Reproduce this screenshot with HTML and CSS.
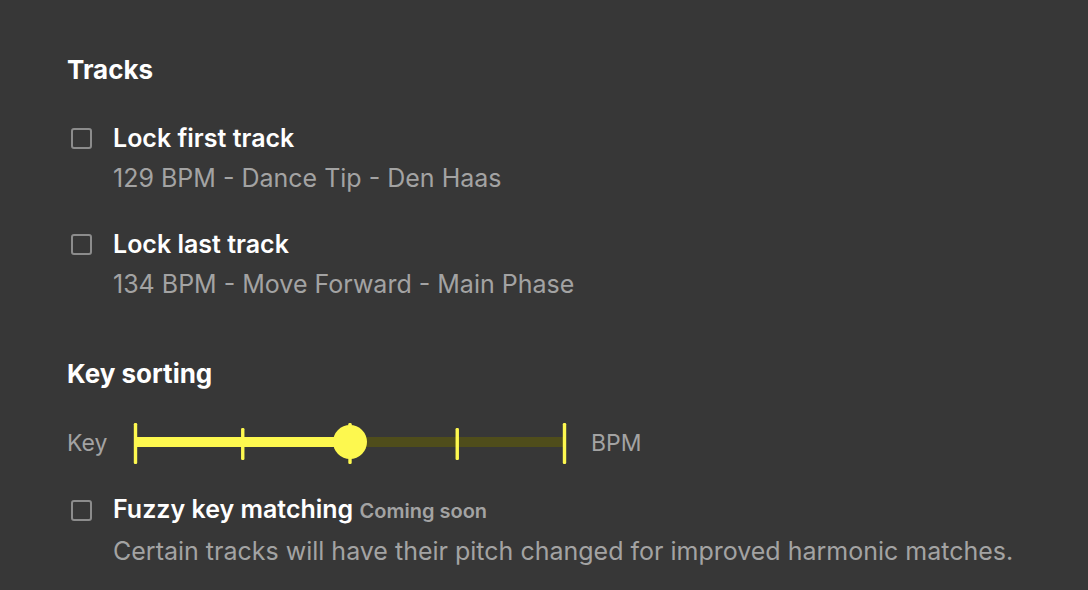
FILE: index.html
```html
<!DOCTYPE html>
<html>
<head>
<meta charset="utf-8">
<link rel="stylesheet" href="styles.css">
</head>
<body>
<main class="panel">
  <section class="section">
    <h2 class="heading">Tracks</h2>
    <div class="option">
      <span class="checkbox"></span>
      <div class="option-text">
        <div class="option-title">Lock first track</div>
        <div class="option-sub">129 BPM - Dance Tip - Den Haas</div>
      </div>
    </div>
    <div class="option">
      <span class="checkbox"></span>
      <div class="option-text">
        <div class="option-title">Lock last track</div>
        <div class="option-sub">134 BPM - Move Forward - Main Phase</div>
      </div>
    </div>
  </section>
  <section class="section section-key">
    <h2 class="heading heading-key">Key sorting</h2>
    <div class="slider-row">
      <span class="slider-label slider-label-start">Key</span>
      <svg class="slider" width="440" height="48" viewBox="0 0 440 48">
        <rect x="5.5" y="18" width="429" height="10" fill="#4f4d1b"/>
        <rect x="5.5" y="18" width="214.5" height="10" fill="#fdf84f"/>
        <rect x="3.8" y="4" width="3.4" height="41" rx="1.2" fill="#fdf84f"/>
        <rect x="111.05" y="9" width="3.4" height="32" rx="1.2" fill="#fdf84f"/>
        <rect x="218.3" y="4" width="3.4" height="41" rx="1.2" fill="#fdf84f"/>
        <rect x="325.55" y="9" width="3.4" height="32" rx="1.2" fill="#fdf84f"/>
        <rect x="432.8" y="4" width="3.4" height="41" rx="1.2" fill="#fdf84f"/>
        <circle cx="220" cy="23" r="17" fill="#fdf84f"/>
      </svg>
      <span class="slider-label slider-label-end">BPM</span>
    </div>
    <div class="option">
      <span class="checkbox checkbox-fuzzy"></span>
      <div class="option-text">
        <div class="option-title">Fuzzy key matching <span class="badge">Coming soon</span></div>
        <div class="option-sub">Certain tracks will have their pitch changed for improved harmonic matches.</div>
      </div>
    </div>
  </section>
</main>
</body>
</html>
```

FILE: styles.css
```css
html, body {
  margin: 0;
  padding: 0;
  background: #373737;
}
body {
  font-family: Inter, "Noto Sans", "Liberation Sans", sans-serif;
  color: #ffffff;
  width: 1088px;
  height: 590px;
  overflow: hidden;
}
.panel {
  padding: 54px 0 0 67px;
  display: flex;
  flex-direction: column;
}
.section {
  display: flex;
  flex-direction: column;
}
.section-key {
  margin-top: 24px;
}
.heading {
  margin: 0 0 36px 0;
  font-size: 26px;
  line-height: 32px;
  font-weight: 700;
  letter-spacing: 0;
}
.heading-key {
  margin-bottom: 29px;
}
.option {
  display: flex;
  align-items: flex-start;
  gap: 21px;
  margin-bottom: 26px;
}
.checkbox {
  flex: none;
  box-sizing: border-box;
  width: 21px;
  height: 21px;
  margin: 6px 0 0 4px;
  border: 2px solid #8c8c8c;
  border-radius: 3px;
}
.checkbox-fuzzy {
  margin-top: 7px;
}
.option-text {
  display: flex;
  flex-direction: column;
}
.option-title {
  font-size: 25px;
  line-height: 32px;
  font-weight: 600;
  white-space: nowrap;
}
.option-sub {
  font-size: 25px;
  line-height: 48px;
  color: #a3a3a3;
  font-weight: 400;
  white-space: nowrap;
}
.badge {
  font-size: 20px;
  font-weight: 600;
  color: #a3a3a3;
}
.slider-row {
  display: flex;
  align-items: center;
  height: 48px;
  margin: 0 0 26px 0;
}
.slider-label {
  font-size: 23px;
  color: #a3a3a3;
}
.slider-label-start {
  width: 63px;
}
.slider {
  display: block;
  flex: none;
}
.slider-label-end {
  margin-left: 21px;
}
```
